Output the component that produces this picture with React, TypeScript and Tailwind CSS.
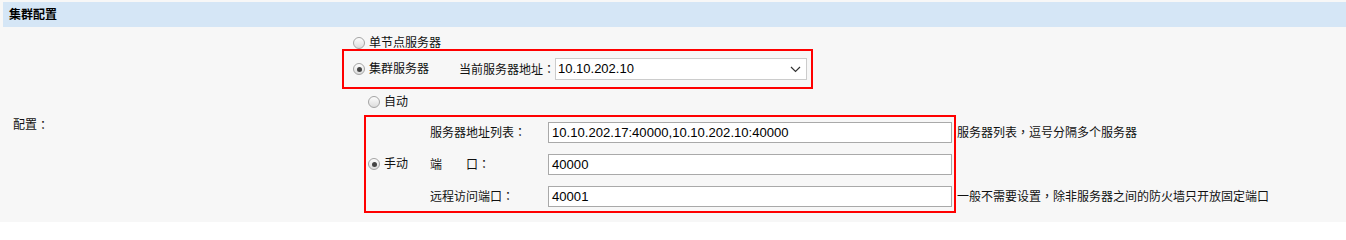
import React from "react";

const FONT = { fontFamily: '"Liberation Sans", "Noto Sans CJK SC", sans-serif' };
const PUNCT = { fontFamily: '"Noto Sans CJK TC", sans-serif' };

function T({ children }: { children: string }) {
  const parts = children.split(/([：，])/);
  return (
    <>
      {parts.map((p, i) =>
        p === "：" || p === "，" ? (
          <span key={i} style={PUNCT}>
            {p}
          </span>
        ) : (
          <React.Fragment key={i}>{p}</React.Fragment>
        )
      )}
    </>
  );
}

function Radio({ checked }: { checked?: boolean }) {
  return (
    <span className="relative flex h-[12px] w-[12px] shrink-0 items-center justify-center rounded-full border border-[#a4a4a4] bg-gradient-to-b from-[#fdfdfd] to-[#dcdcdc]">
      {checked && <span className="h-[5px] w-[5px] rounded-full bg-[#444]" />}
    </span>
  );
}

function Row({ label, value, hint }: { label: string; value: string; hint?: string }) {
  return (
    <div className="flex h-[21px] items-center">
      <span className="w-[118px] shrink-0 whitespace-nowrap text-[12px] text-[#111]">
        <T>{label}</T>
      </span>
      <div className="flex h-[21px] w-[404px] shrink-0 items-center border border-[#a9a9a9] bg-white pl-[3px] text-[13.1px] text-black">
        {value}
      </div>
      {hint && (
        <span className="ml-[5px] shrink-0 whitespace-nowrap text-[12px] text-[#111]">
          <T>{hint}</T>
        </span>
      )}
    </div>
  );
}

export default function App() {
  return (
    <div className="h-[222px] w-[1346px] overflow-hidden bg-[#f7f7f7] pt-[2px] pl-[3px]" style={FONT}>
      <div className="flex h-[25px] items-center bg-[#d5e6f6] pl-[6px] text-[12px] font-bold text-black">
        集群配置
      </div>
      <div className="-ml-[3px] flex">
        <div className="flex w-[342px] shrink-0 items-center pl-[13px] text-[12px] text-[#111]">
          <T>配置：</T>
        </div>
        <div className="flex flex-col pb-[9px] text-[12px] text-[#111]">
          <div className="mt-[10px] flex h-[12px] items-center gap-[4px] pl-[11px] leading-[12px]">
            <Radio />
            <span>单节点服务器</span>
          </div>
          <div className="flex h-[40px] w-[471px] items-center border-2 border-[#ff0000] pl-[9px]">
            <Radio checked />
            <span className="ml-[4px] w-[90px] shrink-0">集群服务器</span>
            <span className="w-[96px] shrink-0 whitespace-nowrap">
              <T>当前服务器地址：</T>
            </span>
            <div className="flex h-[22px] w-[252px] shrink-0 items-center justify-between border border-[#cccccc] bg-white pl-[2px] pr-[5px] text-[13px] text-black">
              <span>10.10.202.10</span>
              <svg width="11" height="7" viewBox="0 0 11 7" fill="none">
                <path d="M1 1l4.5 4.5L10 1" stroke="#333" strokeWidth="1.2" />
              </svg>
            </div>
          </div>
          <div className="flex h-[26px] items-center gap-[4px] pl-[26px]">
            <Radio />
            <span>自动</span>
          </div>
          <div className="ml-[22px] flex h-[98px] w-[592px] items-center border-2 border-[#ff0000] pl-[2px]">
            <Radio checked />
            <span className="ml-[4px] w-[46px] shrink-0">手动</span>
            <div className="flex h-full flex-col gap-[11px] pt-[5px]">
              <Row label="服务器地址列表：" value="10.10.202.17:40000,10.10.202.10:40000" hint="服务器列表，逗号分隔多个服务器" />
              <Row label="端　　口：" value="40000" />
              <Row
                label="远程访问端口："
                value="40001"
                hint="一般不需要设置，除非服务器之间的防火墙只开放固定端口"
              />
            </div>
          </div>
        </div>
      </div>
    </div>
  );
}
